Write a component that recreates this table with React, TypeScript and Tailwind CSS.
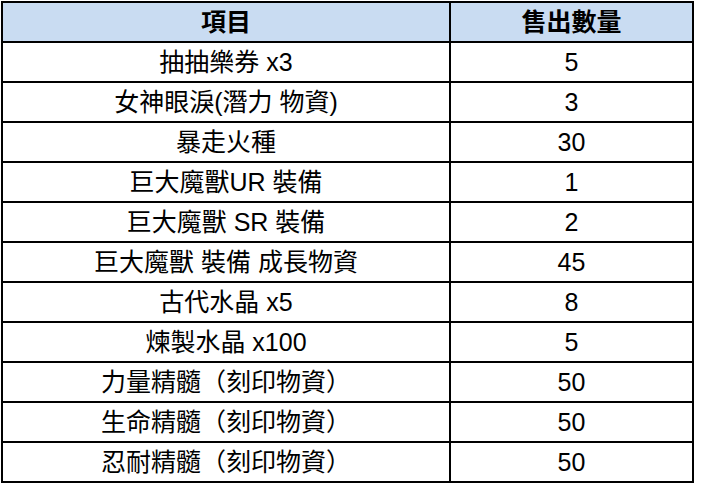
const ROWS: [string, string][] = [
  ["抽抽樂券 x3", "5"],
  ["女神眼淚(潛力 物資)", "3"],
  ["暴走火種", "30"],
  ["巨大魔獸UR 裝備", "1"],
  ["巨大魔獸 SR 裝備", "2"],
  ["巨大魔獸 裝備 成長物資", "45"],
  ["古代水晶 x5", "8"],
  ["煉製水晶 x100", "5"],
  ["力量精髓（刻印物資）", "50"],
  ["生命精髓（刻印物資）", "50"],
  ["忍耐精髓（刻印物資）", "50"],
];

const cell = "flex items-center justify-center leading-none whitespace-nowrap";

export default function App() {
  return (
    <div className="min-h-screen bg-white pl-[1px] pt-[1px] font-['Liberation_Sans','Noto_Sans_CJK_TC',sans-serif] text-[25px] text-black">
      <div className="grid w-[693px] grid-cols-[446px_241px] auto-rows-[38px] gap-[2px] bg-black p-[2px]">
        <div className={`${cell} bg-[#c9dcf2] font-bold`}>項目</div>
        <div className={`${cell} bg-[#c9dcf2] font-bold`}>售出數量</div>
        {ROWS.map(([item, qty]) => (
          <div key={item} className="contents">
            <div className={`${cell} bg-white`}>{item}</div>
            <div className={`${cell} bg-white`}>{qty}</div>
          </div>
        ))}
      </div>
    </div>
  );
}
